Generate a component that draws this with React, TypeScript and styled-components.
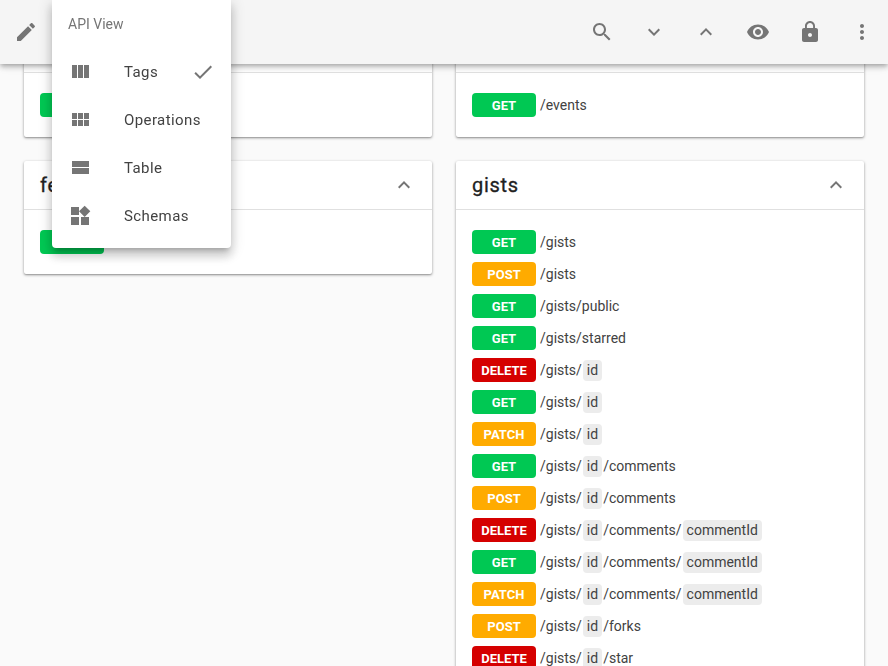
import React from "react";
import styled, { createGlobalStyle } from "styled-components";

const GlobalStyle = createGlobalStyle`
  html, body {
    margin: 0;
    height: 100%;
    overflow: hidden;
    background: #fafafa;
    font-family: Roboto, "Liberation Sans", sans-serif;
  }
`;

const paths: Record<string, string> = {
  edit: "M3 17.25V21h3.75L17.81 9.94l-3.75-3.75L3 17.25zM20.71 7.04c.39-.39.39-1.02 0-1.41l-2.34-2.34c-.39-.39-1.02-.39-1.41 0l-1.83 1.83 3.75 3.75 1.83-1.83z",
  search: "M15.5 14h-.79l-.28-.27C15.41 12.59 16 11.11 16 9.5 16 5.91 13.09 3 9.5 3S3 5.91 3 9.5 5.91 16 9.5 16c1.61 0 3.09-.59 4.23-1.57l.27.28v.79l5 4.99L20.49 19l-4.99-5zm-6 0C7.01 14 5 11.99 5 9.5S7.01 5 9.5 5 14 7.01 14 9.5 11.99 14 9.5 14z",
  more: "M16.59 8.59L12 13.17 7.41 8.59 6 10l6 6 6-6z",
  less: "M12 8l-6 6 1.41 1.41L12 10.83l4.59 4.58L18 14z",
  eye: "M12 4.5C7 4.5 2.73 7.61 1 12c1.73 4.39 6 7.5 11 7.5s9.27-3.11 11-7.5c-1.73-4.39-6-7.5-11-7.5zM12 17c-2.76 0-5-2.24-5-5s2.24-5 5-5 5 2.24 5 5-2.24 5-5 5zm0-8c-1.66 0-3 1.34-3 3s1.34 3 3 3 3-1.34 3-3-1.34-3-3-3z",
  lock: "M18 8h-1V6c0-2.76-2.24-5-5-5S7 3.24 7 6v2H6c-1.1 0-2 .9-2 2v10c0 1.1.9 2 2 2h12c1.1 0 2-.9 2-2V10c0-1.1-.9-2-2-2zm-6 9c-1.1 0-2-.9-2-2s.9-2 2-2 2 .9 2 2-.9 2-2 2zm3.1-9H8.9V6c0-1.71 1.39-3.1 3.1-3.1 1.71 0 3.1 1.39 3.1 3.1v2z",
  dots: "M12 8c1.1 0 2-.9 2-2s-.9-2-2-2-2 .9-2 2 .9 2 2 2zm0 2c-1.1 0-2 .9-2 2s.9 2 2 2 2-.9 2-2-.9-2-2-2zm0 6c-1.1 0-2 .9-2 2s.9 2 2 2 2-.9 2-2-.9-2-2-2z",
  columns: "M10 18h5V5h-5v13zm-6 0h5V5H4v13zM16 5v13h5V5h-5z",
  module: "M4 11h5V5H4v6zm0 7h5v-6H4v6zm6 0h5v-6h-5v6zm6 0h5v-6h-5v6zm-6-7h5V5h-5v6zm6-6v6h5V5h-5z",
  stream: "M4 18h17v-6H4v6zM4 5v6h17V5H4z",
  widgets: "M13 13v8h8v-8h-8zM3 21h8v-8H3v8zM3 3v8h8V3H3zm13.66-1.31L11 7.34 16.66 13l5.66-5.66-5.66-5.65z",
  check: "M9 16.2L4.8 12l-1.4 1.4L9 19 21 7l-1.4-1.4L9 16.2z",
};

const Svg = styled.svg`
  display: block;
  width: 24px;
  height: 24px;
  flex: none;
  fill: #757575;
`;

const Icon = ({ name }: { name: string }) => (
  <Svg viewBox="0 0 24 24">
    <path d={paths[name]} />
  </Svg>
);

const Toolbar = styled.header`
  position: fixed;
  top: 0;
  left: 0;
  right: 0;
  height: 64px;
  z-index: 2;
  display: flex;
  align-items: center;
  justify-content: space-between;
  background: #f5f5f5;
  box-shadow: 0 2px 4px -1px rgba(0, 0, 0, 0.2), 0 4px 5px 0 rgba(0, 0, 0, 0.14), 0 1px 10px 0 rgba(0, 0, 0, 0.12);
`;

const ToolGroup = styled.div`
  display: flex;
  align-items: center;
`;

const ToolButton = styled.div`
  width: 52px;
  height: 48px;
  display: flex;
  align-items: center;
  justify-content: center;
`;

const Menu = styled.div`
  position: fixed;
  top: 0;
  left: 52px;
  width: 179px;
  z-index: 3;
  padding-bottom: 8px;
  background: #fff;
  border-radius: 0 0 4px 4px;
  box-shadow: 0 5px 5px -3px rgba(0, 0, 0, 0.2), 0 8px 10px 1px rgba(0, 0, 0, 0.14), 0 3px 14px 2px rgba(0, 0, 0, 0.12);
`;

const MenuTitle = styled.div`
  height: 48px;
  padding: 0 16px;
  display: flex;
  align-items: center;
  font-size: 14px;
  color: #757575;
`;

const MenuItem = styled.div`
  height: 48px;
  padding: 0 16px;
  display: flex;
  align-items: center;
  font-size: 15px;
  letter-spacing: 0.4px;
  color: #424242;
`;

const MenuLabel = styled.span`
  flex: 1;
  margin-left: 32px;
`;

const Page = styled.main`
  display: flex;
  gap: 24px;
  align-items: flex-start;
  padding: 24px;
`;

const Column = styled.div`
  flex: 1;
  min-width: 0;
  display: flex;
  flex-direction: column;
  gap: 24px;
`;

const Card = styled.section`
  background: #fff;
  border-radius: 2px;
  box-shadow: 0 1px 3px 0 rgba(0, 0, 0, 0.4), 0 1px 1px 0 rgba(0, 0, 0, 0.1);
`;

const CardHeader = styled.div`
  height: 48px;
  padding: 0 16px;
  display: flex;
  align-items: center;
  justify-content: space-between;
  border-bottom: 1px solid #e0e0e0;
`;

const CardTitle = styled.h2`
  margin: 0;
  font-size: 20px;
  font-weight: 400;
  letter-spacing: 0.7px;
  -webkit-text-stroke: 0.3px #212121;
  color: #212121;
`;

const CardBody = styled.div`
  padding: 16px;
`;

const Row = styled.div`
  height: 32px;
  display: flex;
  align-items: center;
`;

const badgeColors: Record<string, string> = {
  GET: "#00c853",
  POST: "#ffab00",
  PATCH: "#ffab00",
  DELETE: "#d50000",
};

const Badge = styled.span<{ $method: string }>`
  width: 64px;
  height: 24px;
  flex: none;
  display: flex;
  align-items: center;
  justify-content: center;
  margin-right: 4px;
  padding-top: 1px;
  box-sizing: border-box;
  border-radius: 4px;
  background: ${(p) => badgeColors[p.$method]};
  color: #fff;
  font-size: 13px;
  font-weight: 700;
`;

const PathText = styled.span`
  font-size: 14px;
  color: #424242;
  white-space: nowrap;
`;

const Param = styled.span`
  display: inline-block;
  margin: 0 1px;
  padding: 0 4px;
  line-height: 21px;
  border-radius: 4px;
  background: #ececec;
  color: #424242;
`;

type Op = [string, string];

const Operation = ({ op }: { op: Op }) => {
  const [method, path] = op;
  const parts = path.split(/(\{\w+\})/).filter(Boolean);
  return (
    <Row>
      <Badge $method={method}>{method}</Badge>
      <PathText>
        {parts.map((part, i) =>
          part.startsWith("{") ? <Param key={i}>{part.slice(1, -1)}</Param> : <span key={i}>{part}</span>
        )}
      </PathText>
    </Row>
  );
};

const ApiCard = ({ title, ops }: { title: string; ops: Op[] }) => (
  <Card>
    <CardHeader>
      <CardTitle>{title}</CardTitle>
      <Icon name="less" />
    </CardHeader>
    <CardBody>
      {ops.map((op, i) => (
        <Operation key={i} op={op} />
      ))}
    </CardBody>
  </Card>
);

const gists: Op[] = [
  ["GET", "/gists"],
  ["POST", "/gists"],
  ["GET", "/gists/public"],
  ["GET", "/gists/starred"],
  ["DELETE", "/gists/{id}"],
  ["GET", "/gists/{id}"],
  ["PATCH", "/gists/{id}"],
  ["GET", "/gists/{id}/comments"],
  ["POST", "/gists/{id}/comments"],
  ["DELETE", "/gists/{id}/comments/{commentId}"],
  ["GET", "/gists/{id}/comments/{commentId}"],
  ["PATCH", "/gists/{id}/comments/{commentId}"],
  ["POST", "/gists/{id}/forks"],
  ["DELETE", "/gists/{id}/star"],
];

const menuItems = [
  { icon: "columns", label: "Tags", checked: true },
  { icon: "module", label: "Operations" },
  { icon: "stream", label: "Table" },
  { icon: "widgets", label: "Schemas" },
];

const App = () => (
  <>
    <GlobalStyle />
    <Toolbar>
      <ToolButton>
        <Icon name="edit" />
      </ToolButton>
      <ToolGroup>
        {["search", "more", "less", "eye", "lock", "dots"].map((name) => (
          <ToolButton key={name}>
            <Icon name={name} />
          </ToolButton>
        ))}
      </ToolGroup>
    </Toolbar>
    <Menu>
      <MenuTitle>API View</MenuTitle>
      {menuItems.map((item) => (
        <MenuItem key={item.label}>
          <Icon name={item.icon} />
          <MenuLabel>{item.label}</MenuLabel>
          {item.checked && <Icon name="check" />}
        </MenuItem>
      ))}
    </Menu>
    <Page>
      <Column>
        <ApiCard title="emojis" ops={[["GET", "/emojis"]]} />
        <ApiCard title="feeds" ops={[["GET", "/feeds"]]} />
      </Column>
      <Column>
        <ApiCard title="events" ops={[["GET", "/events"]]} />
        <ApiCard title="gists" ops={gists} />
      </Column>
    </Page>
  </>
);

export default App;
